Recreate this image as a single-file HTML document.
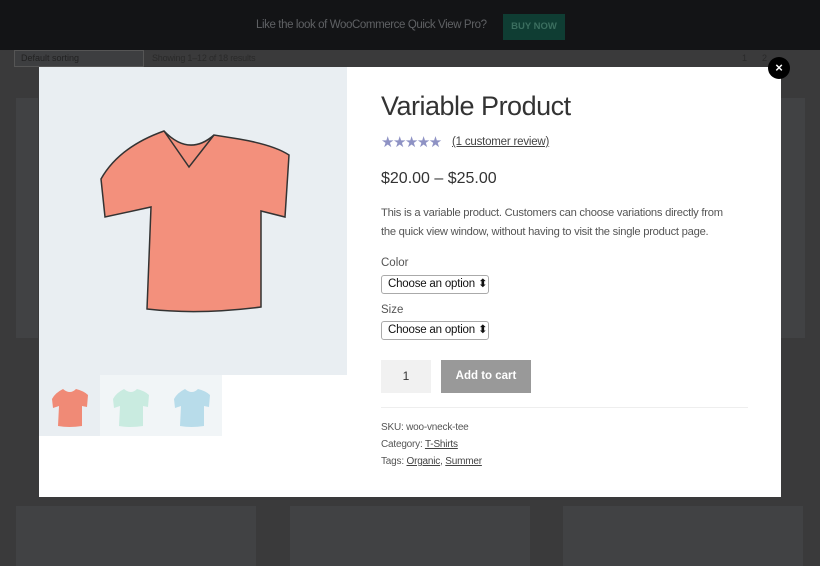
<!DOCTYPE html>
<html><head><style>
body{margin:0;width:820px;height:561px;overflow:hidden;background:#3a3a3b;font-family:"Liberation Sans",sans-serif;position:relative}
.top{position:absolute;left:0;top:0;width:820px;height:50px;background:#131416}
.top span{position:absolute;left:256px;top:19px;color:#5f6164;font-size:11.5px;letter-spacing:-0.4px;white-space:nowrap}
.buy{position:absolute;left:503px;top:14px;width:62px;height:26px;background:#0f3d33;color:#3b6e5f;font-size:9.5px;font-weight:bold;text-align:center;line-height:26px}
.card{position:absolute;background:#414244}
.modal{position:absolute;left:39px;top:67px;width:742px;height:430px;background:#fff}
.img{position:absolute;left:0;top:0;width:308px;height:308px;background:#e9eef2}
.th{position:absolute;top:308px;width:61px;height:61px;background:#f1f5f7}
.close{position:absolute;left:768px;top:57px;width:22px;height:22px;border-radius:50%;background:#000;color:#fff;font-size:13px;text-align:center;line-height:22px;font-weight:bold}
.r{position:absolute;left:342px;color:#555;white-space:nowrap}
h1{position:absolute;left:342px;top:24px;margin:0;font-weight:normal;font-size:27px;color:#333;letter-spacing:-0.5px}
.sel{position:absolute;left:342px;width:100px;height:17px;border:1px solid #aaa;border-radius:3px;font-size:11.5px;color:#111;line-height:17px;padding-left:6px;white-space:nowrap;letter-spacing:-0.2px}
a{color:#444;text-decoration:underline}
</style></head><body>
<div class="top"><span>Like the look of WooCommerce Quick View Pro?</span><div class="buy">BUY NOW</div></div>
<div style="position:absolute;left:14px;top:50px;width:122px;height:15px;border:1px solid #555;background:#3d3e40;color:#222;font-size:9px;line-height:15px;padding-left:6px">Default sorting</div>
<div style="position:absolute;left:152px;top:53px;color:#2a2a2a;font-size:9px;letter-spacing:-0.2px">Showing 1–12 of 18 results</div>
<div style="position:absolute;left:742px;top:53px;color:#2a2a2a;font-size:9px">1 &nbsp;&nbsp;&nbsp;&nbsp; 2</div>
<div class="card" style="left:16px;top:98px;width:22px;height:240px"></div>
<div class="card" style="left:781px;top:98px;width:24px;height:240px"></div>
<div class="card" style="left:16px;top:506px;width:240px;height:60px"></div>
<div class="card" style="left:290px;top:506px;width:240px;height:60px"></div>
<div class="card" style="left:563px;top:506px;width:240px;height:60px"></div>
<div class="modal">
 <div class="img"><svg width="308" height="308" viewBox="0 0 308 308">
  <path d="M62 112 Q80 80 125 64 Q150 90 175 68 L200 72 Q235 78 250 88 L246 150 L222 144 L222 240 Q160 248 108 242 L112 140 L66 150 Z" fill="#f3907c" stroke="#333" stroke-width="1.5"/>
  <path d="M125 64 L150 100 L175 68" fill="none" stroke="#333" stroke-width="1.5"/>
 </svg></div>
 <div class="th" style="left:0;background:#e9eef2"><svg width="61" height="61"><path d="M13 24 Q16 18 24 14 Q31 20 37 14 Q45 16 49 20 L48 32 L43 31 L43 51 Q30 53 19 51 L20 31 L14 33 Z" fill="#f08a76"/></svg></div>
 <div class="th" style="left:61px"><svg width="61" height="61"><path d="M13 24 Q16 18 24 14 Q31 20 37 14 Q45 16 49 20 L48 32 L43 31 L43 51 Q30 53 19 51 L20 31 L14 33 Z" fill="#c9ebe0"/></svg></div>
 <div class="th" style="left:122px"><svg width="61" height="61"><path d="M13 24 Q16 18 24 14 Q31 20 37 14 Q45 16 49 20 L48 32 L43 31 L43 51 Q30 53 19 51 L20 31 L14 33 Z" fill="#b8dcea"/></svg></div>
 <h1>Variable Product</h1>
 <div class="r" style="top:66px;color:#8e92c4;font-size:15px;letter-spacing:-1.5px">★★★★★</div>
 <div class="r" style="left:413px;top:69px;font-size:11.5px;letter-spacing:-0.2px"><a>(1 customer review)</a></div>
 <div class="r" style="top:103px;font-size:16px;color:#333">$20.00 – $25.00</div>
 <div class="r" style="top:137px;font-size:11.2px;line-height:19px;letter-spacing:-0.25px">This is a variable product. Customers can choose variations directly from<br>the quick view window, without having to visit the single product page.</div>
 <div class="r" style="top:190px;font-size:11.5px">Color</div>
 <div class="sel" style="top:208px">Choose an option ⬍</div>
 <div class="r" style="top:237px;font-size:11.5px">Size</div>
 <div class="sel" style="top:254px">Choose an option ⬍</div>
 <div style="position:absolute;left:342px;top:293px;width:50px;height:33px;background:#f1f1f1;font-size:12px;line-height:33px;text-align:center;color:#333">1</div>
 <div style="position:absolute;left:402px;top:293px;width:90px;height:33px;background:#999;color:#fff;font-size:11.5px;font-weight:bold;line-height:33px;text-align:center">Add to cart</div>
 <div style="position:absolute;left:342px;top:340px;width:367px;height:1px;background:#eee"></div>
 <div class="r" style="top:352px;font-size:10px;line-height:17px;letter-spacing:-0.2px">SKU: woo-vneck-tee<br>Category: <a>T-Shirts</a><br>Tags: <a>Organic</a>, <a>Summer</a></div>
</div>
<div class="close">×</div>
</body></html>
